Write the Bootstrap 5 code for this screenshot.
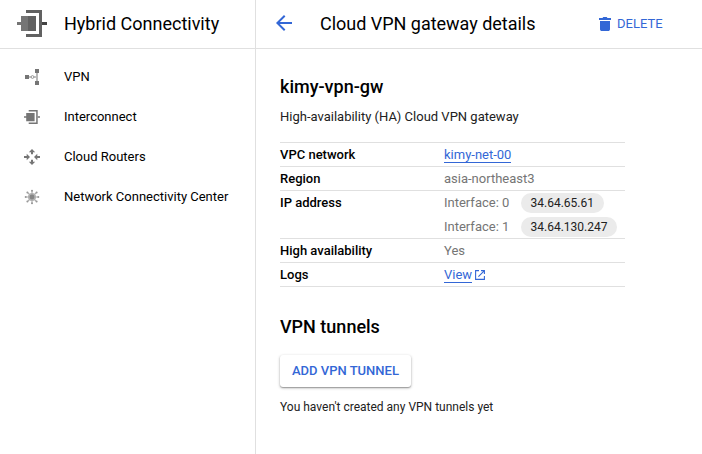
<!DOCTYPE html>
<html lang="en">
<head>
<meta charset="utf-8">
<meta name="viewport" content="width=device-width, initial-scale=1">
<title>Cloud VPN gateway details</title>
<link rel="stylesheet" href="https://cdn.jsdelivr.net/npm/bootstrap@5.3.0/dist/css/bootstrap.min.css">
<style>
body{font-family:Roboto,"Liberation Sans",sans-serif;font-size:13px;line-height:20px;color:#212121;background:#fff;overflow:hidden}
svg{display:block;flex:none}
.side{width:256px;border-right:1px solid #e0e0e0}
.bar{height:49px;border-bottom:1px solid #e0e0e0;font-size:18px;line-height:24px;color:#000}
.side .bar{padding:0 0 0 16px;gap:16px}
.page .bar{padding:0 0 0 16px}
.page .bar .title{width:299px;padding-left:24px}
.bar .title{letter-spacing:-.02px}
.bar svg{margin-bottom:2px}
.menu{padding-top:8px}
.menu .nav-link{height:40px;padding:0 0 0 24px;gap:24px;color:#000}
.blue,.blue:hover{color:#3367d6}
.del{font-size:13px;font-weight:400;line-height:20px;gap:6px}
.content{padding:26px 24px}
h1,h2{font-size:18px;font-weight:500;line-height:24px;color:#000;margin:0}
.desc{margin:8px 0 15px}
.props{width:345px;border-top:1px solid #e0e0e0}
.prop{border-bottom:1px solid #e0e0e0}
.prop dt{width:164px;line-height:23px;font-weight:500;color:#000}
.prop dd{line-height:23px;color:#757575}
.under{line-height:15px;border-bottom:1px solid #3367d6;text-decoration:none}
.out{margin-left:3px}
.ip{height:20px;line-height:20px;padding:0 10px 0 9.500px;font-size:12px;color:#212121;background:#ebebeb}
.iface{height:24px;line-height:24px}
.iface+.iface{height:23px}
.iface>span:first-child{width:77px}
.add{height:32px;padding:0 12px;border:0;border-radius:3px;background:#fff;font-size:13px;font-weight:500;line-height:32px;box-shadow:0 1px 3px rgba(0,0,0,.3),0 1px 1px rgba(0,0,0,.22)}
.note{font-size:12px;line-height:16px}
</style>
</head>
<body>
<div class="d-flex vh-100">
  <aside class="side flex-shrink-0">
    <header class="bar d-flex align-items-center">
      <svg width="32" height="32" viewBox="0 0 32 32" shape-rendering="crispEdges"><path d="M10 3h16v27H10v-3h13V6H10z" fill="#616161"/><path d="M5 9h7v15H5z" fill="#757575"/><path d="M12 9h8v15h-8z" fill="#616161"/><path d="M1 15h4v3H1z" fill="#757575"/><path d="M26 15h5v3h-5z" fill="#424242"/></svg>
      <span>Hybrid Connectivity</span>
    </header>
    <nav class="menu nav flex-column">
      <a class="nav-link d-flex align-items-center" href="#"><svg width="16" height="16" viewBox="0 0 16 16" fill="#757575"><path d="M1 6h4v4H1zM11 0h4v4h-4zM11 12h4v4h-4z"/><path d="M5 7.500h2v1H5zM10 7.500h2v1h-2zM12.400 4h1.200v8h-1.200z" opacity=".85"/><circle cx="8.500" cy="8" r="1.400" fill="none" stroke="#8c8c8c" stroke-width=".9"/></svg><span>VPN</span></a>
      <a class="nav-link d-flex align-items-center" href="#"><svg width="16" height="16" viewBox="0 0 16 16" fill="#757575"><path d="M4.700 1h9v14h-9v-1.400h7.500V2.400H4.700z"/><path d="M2.200 3.900h8.400v8.400H2.200zM0 7.300h2.200v1.500H0zM13.700 7.300H16v1.500h-2.300z"/></svg><span>Interconnect</span></a>
      <a class="nav-link d-flex align-items-center" href="#"><svg width="16" height="16" viewBox="0 0 16 16" fill="#757575"><path d="M8 0l3.200 3.300H9v2H7v-2H4.800zM8 16l3.200-3.300H9v-2H7v2H4.800zM6 8L2.700 4.800V7H0v2h2.700v2.200zM10 8l3.300-3.200V7H16v2h-2.700v2.200z"/></svg><span>Cloud Routers</span></a>
      <a class="nav-link d-flex align-items-center" href="#"><svg width="16" height="16" viewBox="0 0 16 16"><path d="M8 1v14M1 8h14M3.200 3.200l9.600 9.600M12.800 3.200l-9.600 9.600" stroke="#aaa" stroke-width="1.100"/><g fill="#999"><circle cx="8" cy="1.700" r="1"/><circle cx="8" cy="14.300" r="1"/><circle cx="1.700" cy="8" r="1"/><circle cx="14.300" cy="8" r="1"/><circle cx="3.400" cy="3.400" r="1"/><circle cx="12.600" cy="3.400" r="1"/><circle cx="3.400" cy="12.600" r="1"/><circle cx="12.600" cy="12.600" r="1"/></g><circle cx="8" cy="8" r="3.200" fill="#858585" stroke="#b0b0b0" stroke-width="1.600"/></svg><span>Network Connectivity Center</span></a>
    </nav>
  </aside>
  <main class="page flex-grow-1">
    <header class="bar d-flex align-items-center">
      <svg class="blue" width="24" height="24" viewBox="0 0 24 24" fill="currentColor"><path d="M20 11H7.830l5.590-5.590L12 4l-8 8 8 8 1.410-1.410L7.830 13H20v-2z"/></svg>
      <span class="title">Cloud VPN gateway details</span>
      <a class="del blue d-flex align-items-center text-decoration-none" href="#"><svg class="ms-1 mb-0" width="12" height="14" viewBox="0 0 12 14" fill="currentColor"><path d="M0 1h3.500l.8-1h3.400l.8 1H12v2H0zM1 4h10v8.200c0 1-.8 1.800-1.800 1.800H2.800C1.800 14 1 13.200 1 12.200z"/></svg><span>DELETE</span></a>
    </header>
    <div class="content">
      <h1>kimy-vpn-gw</h1>
      <p class="desc">High-availability (HA) Cloud VPN gateway</p>
      <dl class="props mb-0">
        <div class="prop d-flex"><dt>VPC network</dt><dd class="mb-0 d-flex align-items-center"><a class="blue under" href="#">kimy-net-00</a></dd></div>
        <div class="prop d-flex"><dt>Region</dt><dd class="mb-0">asia-northeast3</dd></div>
        <div class="prop d-flex"><dt>IP address</dt><dd class="mb-0">
          <div class="iface d-flex align-items-center"><span>Interface: 0</span><span class="ip rounded-pill">34.64.65.61</span></div>
          <div class="iface d-flex align-items-center"><span>Interface: 1</span><span class="ip rounded-pill">34.64.130.247</span></div>
        </dd></div>
        <div class="prop d-flex"><dt>High availability</dt><dd class="mb-0">Yes</dd></div>
        <div class="prop d-flex"><dt>Logs</dt><dd class="mb-0 d-flex align-items-center"><a class="blue under" href="#">View</a><svg class="blue out" width="10" height="10" viewBox="0 0 10 10" fill="none" stroke="currentColor" stroke-width="1.100"><path d="M4 .6H.6v8.800h8.800V6M6 .6h3.400V4M9.400.6L3.400 6.600"/></svg></dd></div>
      </dl>
      <h2 class="pt-4 mt-1">VPN tunnels</h2>
      <button type="button" class="btn add blue d-block mt-3">ADD VPN TUNNEL</button>
      <p class="note mt-2 pt-1 mb-0">You haven't created any VPN tunnels yet</p>
    </div>
  </main>
</div>
<script src="https://cdn.jsdelivr.net/npm/bootstrap@5.3.0/dist/js/bootstrap.bundle.min.js"></script>
</body>
</html>
